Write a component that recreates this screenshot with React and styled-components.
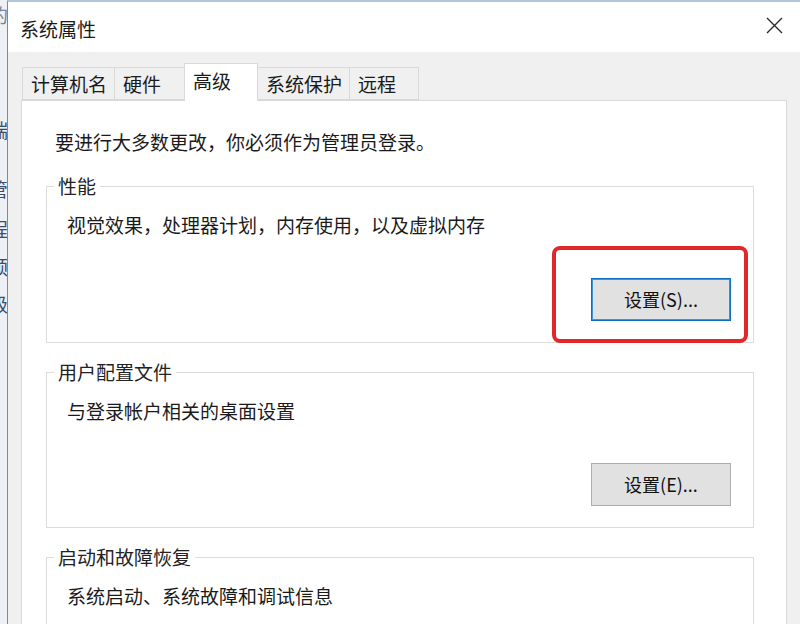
import React from "react";
import styled, { createGlobalStyle } from "styled-components";

const Global = createGlobalStyle`
  html, body { margin: 0; padding: 0; background: #f0f0f0; }
  body { font-family: "Noto Sans CJK SC", "Noto Sans", sans-serif; }
  * { box-sizing: border-box; }
`;

const Screen = styled.div`
  width: 800px;
  height: 624px;
  overflow: hidden;
  display: flex;
  background: #f0f0f0;
`;

const BackWindow = styled.div`
  width: 7px;
  flex: none;
  overflow: hidden;
  background: #edf1f6;
  display: flex;
  flex-direction: column;
  font-size: 19px;
  line-height: 22px;
`;

const BackChar = styled.div`
  margin-left: -11px;
  margin-top: ${(p) => p.$mt}px;
  color: ${(p) => p.$c || "#3d4c6c"};
  white-space: nowrap;
`;

const Dialog = styled.div`
  flex: 1;
  display: flex;
  flex-direction: column;
  border-left: 1px solid #6f8cb0;
  border-top: 2px solid #b3c5d9;
  min-width: 0;
`;

const TitleBar = styled.div`
  height: 50px;
  flex: none;
  background: #ffffff;
  display: flex;
  align-items: center;
  justify-content: space-between;
  padding: 4px 17px 0 12px;
`;

const Title = styled.div`
  font-size: 19px;
  line-height: 24px;
  color: #1a1a1a;
`;

const CloseBtn = styled.div`
  width: 18px;
  height: 18px;
  margin-bottom: 7px;
  display: flex;
  align-items: center;
  justify-content: center;
`;

const Body = styled.div`
  flex: 1;
  display: flex;
  flex-direction: column;
  padding: 11px 13px 0 13px;
  background: #f0f0f0;
`;

const TabRow = styled.div`
  display: flex;
  align-items: flex-end;
  padding-left: 1px;
  position: relative;
  z-index: 1;
`;

const Tab = styled.div`
  height: ${(p) => (p.$active ? 38 : 33)}px;
  min-width: ${(p) => (p.$active ? 74 : 70)}px;
  margin-left: ${(p) => (p.$first || p.$active || p.$afterActive ? 0 : -1)}px;
  margin-bottom: ${(p) => (p.$active ? -1 : 0)}px;
  padding: ${(p) => (p.$active ? "0 8px 4px 8px" : "0 7px 0 8px")};
  display: flex;
  align-items: center;
  font-size: 19px;
  line-height: 24px;
  color: #1a1a1a;
  background: ${(p) => (p.$active ? "#ffffff" : "#f0f0f0")};
  border: 1px solid #d9d9d9;
  border-left: ${(p) => (p.$afterActive ? "none" : "1px solid #d9d9d9")};
  border-right: ${(p) => (p.$beforeActive ? "none" : "1px solid #d9d9d9")};
  border-bottom: ${(p) => (p.$active ? "none" : "1px solid #d9d9d9")};
  white-space: nowrap;
`;

const Panel = styled.div`
  flex: 1;
  background: #ffffff;
  border: 1px solid #d9d9d9;
  border-bottom: none;
  padding: 29px 32px 0 24px;
  display: flex;
  flex-direction: column;
`;

const Notice = styled.div`
  font-size: 19px;
  line-height: 24px;
  color: #1a1a1a;
  padding-left: 9px;
`;

const Group = styled.fieldset`
  margin: ${(p) => p.$mt}px 0 0 0;
  padding: 0 22px 21px 7px;
  border: 1px solid #dcdcdc;
  display: flex;
  flex-direction: column;
  min-width: 0;
`;

const Legend = styled.legend`
  padding: 0 4px;
  font-size: 19px;
  line-height: 24px;
  color: #222;
`;

const Desc = styled.div`
  margin-top: 15px;
  padding-left: 13px;
  font-size: 19px;
  line-height: 24px;
  color: #1a1a1a;
`;

const ButtonRow = styled.div`
  margin-top: ${(p) => p.$mt}px;
  display: flex;
  justify-content: flex-end;
`;

const ButtonWrap = styled.div`
  position: relative;
`;

const Button = styled.button`
  width: 140px;
  height: 43px;
  font-family: "Noto Sans CJK SC", "Noto Sans", sans-serif;
  font-size: 18px;
  color: #111;
  background: #e1e1e1;
  border: 1px solid ${(p) => (p.$focused ? "#0a6fc2" : "#adadad")};
  box-shadow: ${(p) => (p.$focused ? "inset 0 0 0 1px #3d95d8" : "none")};
  padding: 0 0 2px 0;
  margin: 0;
  display: flex;
  align-items: center;
  justify-content: center;
`;

const Highlight = styled.div`
  position: absolute;
  left: -39px;
  right: -17px;
  top: -32px;
  bottom: -22px;
  border: 4px solid #e0282b;
  border-radius: 8px;
  pointer-events: none;
`;

const backChars = [
  { ch: "的", mt: 4, c: "#7a8496" },
  { ch: "端", mt: 93 },
  { ch: "管", mt: 37 },
  { ch: "程", mt: 18 },
  { ch: "预", mt: 16 },
  { ch: "级", mt: 15 },
];

const tabs = ["计算机名", "硬件", "高级", "系统保护", "远程"];
const activeIndex = 2;

export default function App() {
  return (
    <>
      <Global />
      <Screen>
        <BackWindow>
          {backChars.map((b, i) => (
            <BackChar key={i} $mt={b.mt} $c={b.c}>
              {b.ch}
            </BackChar>
          ))}
        </BackWindow>
        <Dialog>
          <TitleBar>
            <Title>系统属性</Title>
            <CloseBtn>
              <svg width="17" height="17" viewBox="0 0 17 17">
                <path d="M1 1 L16 16 M16 1 L1 16" stroke="#2b2b2b" strokeWidth="1.4" fill="none" />
              </svg>
            </CloseBtn>
          </TitleBar>
          <Body>
            <TabRow>
              {tabs.map((t, i) => (
                <Tab
                  key={t}
                  $first={i === 0}
                  $active={i === activeIndex}
                  $afterActive={i === activeIndex + 1}
                  $beforeActive={i === activeIndex - 1}
                >
                  {t}
                </Tab>
              ))}
            </TabRow>
            <Panel>
              <Notice>要进行大多数更改，你必须作为管理员登录。</Notice>
              <Group $mt={20}>
                <Legend>性能</Legend>
                <Desc>视觉效果，处理器计划，内存使用，以及虚拟内存</Desc>
                <ButtonRow $mt={41}>
                  <ButtonWrap>
                    <Button $focused>设置(S)...</Button>
                    <Highlight />
                  </ButtonWrap>
                </ButtonRow>
              </Group>
              <Group $mt={17}>
                <Legend>用户配置文件</Legend>
                <Desc>与登录帐户相关的桌面设置</Desc>
                <ButtonRow $mt={40}>
                  <ButtonWrap>
                    <Button>设置(E)...</Button>
                  </ButtonWrap>
                </ButtonRow>
              </Group>
              <Group $mt={17}>
                <Legend>启动和故障恢复</Legend>
                <Desc>系统启动、系统故障和调试信息</Desc>
                <ButtonRow $mt={40}>
                  <ButtonWrap>
                    <Button>设置(T)...</Button>
                  </ButtonWrap>
                </ButtonRow>
              </Group>
            </Panel>
          </Body>
        </Dialog>
      </Screen>
    </>
  );
}
